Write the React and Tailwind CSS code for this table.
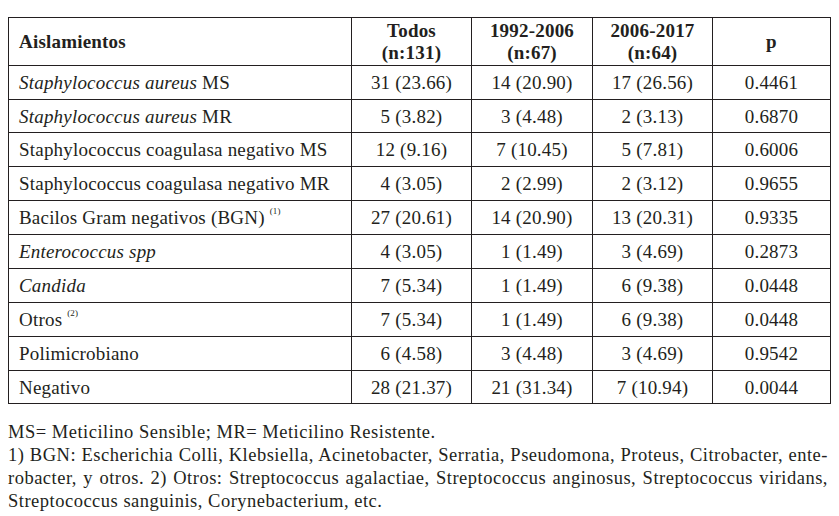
import React from "react";

const rows = [
  { name: <><i>Staphylococcus aureus</i> MS</>, all: "31 (23.66)", a: "14 (20.90)", b: "17 (26.56)", p: "0.4461", h: "h-[34px]" },
  { name: <><i>Staphylococcus aureus</i> MR</>, all: "5 (3.82)", a: "3 (4.48)", b: "2 (3.13)", p: "0.6870", h: "h-[33px]" },
  { name: "Staphylococcus coagulasa negativo MS", all: "12 (9.16)", a: "7 (10.45)", b: "5 (7.81)", p: "0.6006", h: "h-[34px]" },
  { name: "Staphylococcus coagulasa negativo MR", all: "4 (3.05)", a: "2 (2.99)", b: "2 (3.12)", p: "0.9655", h: "h-[34px]" },
  { name: <>Bacilos Gram negativos (BGN) <sup className="text-[9px] align-[6px]">(1)</sup></>, all: "27 (20.61)", a: "14 (20.90)", b: "13 (20.31)", p: "0.9335", h: "h-[34px]" },
  { name: <i>Enterococcus spp</i>, all: "4 (3.05)", a: "1 (1.49)", b: "3 (4.69)", p: "0.2873", h: "h-[34px]" },
  { name: <i>Candida</i>, all: "7 (5.34)", a: "1 (1.49)", b: "6 (9.38)", p: "0.0448", h: "h-[34px]" },
  { name: <>Otros <sup className="text-[9px] align-[6px]">(2)</sup></>, all: "7 (5.34)", a: "1 (1.49)", b: "6 (9.38)", p: "0.0448", h: "h-[34px]" },
  { name: "Polimicrobiano", all: "6 (4.58)", a: "3 (4.48)", b: "3 (4.69)", p: "0.9542", h: "h-[34px]" },
  { name: "Negativo", all: "28 (21.37)", a: "21 (31.34)", b: "7 (10.94)", p: "0.0044", h: "h-[33px]" },
];

export default function App() {
  return (
    <div className="w-[839px] h-[516px] bg-white text-[#231f20] font-['Liberation_Serif',serif] pt-[17px] px-[8px]">
      <table className="border-collapse w-[822px] table-fixed text-[19px] tracking-[0.2px]">
        <colgroup>
          <col className="w-[343px]" />
          <col className="w-[120px]" />
          <col className="w-[121px]" />
          <col className="w-[120px]" />
          <col className="w-[118px]" />
        </colgroup>
        <thead>
          <tr className="h-[48px] font-bold leading-[22px]">
            <th className="border border-[#231f20] text-left pl-[10px]">Aislamientos</th>
            <th className="border border-[#231f20] text-center">Todos<br />(n:131)</th>
            <th className="border border-[#231f20] text-center">1992-2006<br />(n:67)</th>
            <th className="border border-[#231f20] text-center">2006-2017<br />(n:64)</th>
            <th className="border border-[#231f20] text-center">p</th>
          </tr>
        </thead>
        <tbody>
          {rows.map((r, i) => (
            <tr key={i} className={`${r.h} leading-none`}>
              <td className="border border-[#231f20] pl-[10px] whitespace-nowrap">{r.name}</td>
              <td className="border border-[#231f20] text-center">{r.all}</td>
              <td className="border border-[#231f20] text-center">{r.a}</td>
              <td className="border border-[#231f20] text-center">{r.b}</td>
              <td className="border border-[#231f20] text-center">{r.p}</td>
            </tr>
          ))}
        </tbody>
      </table>

      <div className="mt-[17px] text-[18.5px] tracking-[0.5px] leading-[23px] w-[820px]">
        <p>MS= Meticilino Sensible; MR= Meticilino Resistente.</p>
        <p className="text-justify [text-align-last:justify]">1) BGN: Escherichia Colli, Klebsiella, Acinetobacter, Serratia, Pseudomona, Proteus, Citrobacter, ente-</p>
        <p className="text-justify [text-align-last:justify]">robacter, y otros. 2) Otros: Streptococcus agalactiae, Streptococcus anginosus, Streptococcus viridans,</p>
        <p>Streptococcus sanguinis, Corynebacterium, etc.</p>
      </div>
    </div>
  );
}
